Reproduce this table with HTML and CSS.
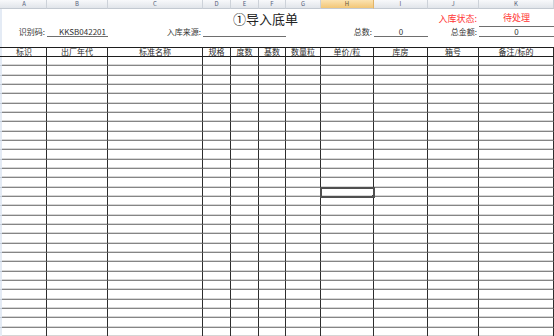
FILE: index.html
```html
<!DOCTYPE html>
<html lang="zh-CN">
<head>
<meta charset="utf-8">
<title>导入底单</title>
<link rel="stylesheet" href="styles.css">
</head>
<body>
<table class="sheet">
  <colgroup>
    <col class="c-stub"><col class="c-a"><col class="c-b"><col class="c-c"><col class="c-d"><col class="c-e"><col class="c-f"><col class="c-g"><col class="c-h"><col class="c-i"><col class="c-j"><col class="c-k">
  </colgroup>
  <thead>
    <tr class="colhdr">
      <th class="corner"></th><th>A</th><th>B</th><th>C</th><th>D</th><th>E</th><th>F</th><th>G</th><th class="on">H</th><th>I</th><th>J</th><th>K</th>
    </tr>
  </thead>
  <tbody>
    <tr class="title-row">
      <td class="stub"></td>
      <td class="title" colspan="9">①导入底单</td>
      <td class="red right">入库状态:</td>
      <td class="red center ul">待处理</td>
    </tr>
    <tr class="info-row">
      <td class="stub"></td>
      <td class="right">识别码:</td>
      <td class="right ul">KKSB042201</td>
      <td class="right">入库来源:</td>
      <td class="ul" colspan="3"></td>
      <td></td>
      <td class="right">总数:</td>
      <td class="center ul">0</td>
      <td class="right">总金额:</td>
      <td class="center ul">0</td>
    </tr>
    <tr class="blank-row">
      <td class="stub"></td><td colspan="11"></td>
    </tr>
    <tr class="hdr">
      <td class="stub"></td><td>标识</td><td>出厂年代</td><td>标准名称</td><td>规格</td><td>度数</td><td>基数</td><td>数量粒</td><td>单价/粒</td><td>库房</td><td>箱号</td><td>备注/标的</td>
    </tr>
    <tr class="r"><td class="stub"></td><td></td><td></td><td></td><td></td><td></td><td></td><td></td><td></td><td></td><td></td><td></td></tr>
    <tr class="r"><td class="stub"></td><td></td><td></td><td></td><td></td><td></td><td></td><td></td><td></td><td></td><td></td><td></td></tr>
    <tr class="r"><td class="stub"></td><td></td><td></td><td></td><td></td><td></td><td></td><td></td><td></td><td></td><td></td><td></td></tr>
    <tr class="r"><td class="stub"></td><td></td><td></td><td></td><td></td><td></td><td></td><td></td><td></td><td></td><td></td><td></td></tr>
    <tr class="r"><td class="stub"></td><td></td><td></td><td></td><td></td><td></td><td></td><td></td><td></td><td></td><td></td><td></td></tr>
    <tr class="r"><td class="stub"></td><td></td><td></td><td></td><td></td><td></td><td></td><td></td><td></td><td></td><td></td><td></td></tr>
    <tr class="r"><td class="stub"></td><td></td><td></td><td></td><td></td><td></td><td></td><td></td><td></td><td></td><td></td><td></td></tr>
    <tr class="r"><td class="stub"></td><td></td><td></td><td></td><td></td><td></td><td></td><td></td><td></td><td></td><td></td><td></td></tr>
    <tr class="r"><td class="stub"></td><td></td><td></td><td></td><td></td><td></td><td></td><td></td><td></td><td></td><td></td><td></td></tr>
    <tr class="r"><td class="stub"></td><td></td><td></td><td></td><td></td><td></td><td></td><td></td><td></td><td></td><td></td><td></td></tr>
    <tr class="r"><td class="stub"></td><td></td><td></td><td></td><td></td><td></td><td></td><td></td><td></td><td></td><td></td><td></td></tr>
    <tr class="r"><td class="stub"></td><td></td><td></td><td></td><td></td><td></td><td></td><td></td><td></td><td></td><td></td><td></td></tr>
    <tr class="r"><td class="stub"></td><td></td><td></td><td></td><td></td><td></td><td></td><td></td><td></td><td></td><td></td><td></td></tr>
    <tr class="r"><td class="stub"></td><td></td><td></td><td></td><td></td><td></td><td></td><td></td><td></td><td></td><td></td><td></td></tr>
    <tr class="r"><td class="stub"></td><td></td><td></td><td></td><td></td><td></td><td></td><td></td><td class="sel"></td><td></td><td></td><td></td></tr>
    <tr class="r"><td class="stub"></td><td></td><td></td><td></td><td></td><td></td><td></td><td></td><td></td><td></td><td></td><td></td></tr>
    <tr class="r"><td class="stub"></td><td></td><td></td><td></td><td></td><td></td><td></td><td></td><td></td><td></td><td></td><td></td></tr>
    <tr class="r"><td class="stub"></td><td></td><td></td><td></td><td></td><td></td><td></td><td></td><td></td><td></td><td></td><td></td></tr>
    <tr class="r"><td class="stub"></td><td></td><td></td><td></td><td></td><td></td><td></td><td></td><td></td><td></td><td></td><td></td></tr>
    <tr class="r"><td class="stub"></td><td></td><td></td><td></td><td></td><td></td><td></td><td></td><td></td><td></td><td></td><td></td></tr>
    <tr class="r"><td class="stub"></td><td></td><td></td><td></td><td></td><td></td><td></td><td></td><td></td><td></td><td></td><td></td></tr>
    <tr class="r"><td class="stub"></td><td></td><td></td><td></td><td></td><td></td><td></td><td></td><td></td><td></td><td></td><td></td></tr>
    <tr class="r"><td class="stub"></td><td></td><td></td><td></td><td></td><td></td><td></td><td></td><td></td><td></td><td></td><td></td></tr>
    <tr class="r"><td class="stub"></td><td></td><td></td><td></td><td></td><td></td><td></td><td></td><td></td><td></td><td></td><td></td></tr>
    <tr class="r"><td class="stub"></td><td></td><td></td><td></td><td></td><td></td><td></td><td></td><td></td><td></td><td></td><td></td></tr>
    <tr class="r"><td class="stub"></td><td></td><td></td><td></td><td></td><td></td><td></td><td></td><td></td><td></td><td></td><td></td></tr>
    <tr class="r"><td class="stub"></td><td></td><td></td><td></td><td></td><td></td><td></td><td></td><td></td><td></td><td></td><td></td></tr>
    <tr class="r"><td class="stub"></td><td></td><td></td><td></td><td></td><td></td><td></td><td></td><td></td><td></td><td></td><td></td></tr>
    <tr class="r"><td class="stub"></td><td></td><td></td><td></td><td></td><td></td><td></td><td></td><td></td><td></td><td></td><td></td></tr>
    <tr class="r"><td class="stub"></td><td></td><td></td><td></td><td></td><td></td><td></td><td></td><td></td><td></td><td></td><td></td></tr>
  </tbody>
</table>
</body>
</html>
```
FILE: styles.css
```css
* { box-sizing: border-box; }
html, body { margin: 0; width: 554px; height: 336px; overflow: hidden; background: #fff; }
body { font-family: "Noto Sans CJK SC", "Noto Sans", sans-serif; color: #222; }

.sheet { border-collapse: separate; border-spacing: 0; table-layout: fixed; width: 554px; }
.sheet td, .sheet th { padding: 0; font-weight: normal; white-space: nowrap; line-height: 1; }

.c-stub { width: 2px; }
.c-a { width: 45px; }
.c-b { width: 61px; }
.c-c { width: 95px; }
.c-d { width: 28px; }
.c-e { width: 28px; }
.c-f { width: 27px; }
.c-g { width: 35px; }
.c-h { width: 53px; }
.c-i { width: 54px; }
.c-j { width: 51px; }
.c-k { width: 75px; }

/* column letters */
.colhdr { height: 9px; }
.colhdr th { font-size: 6px; color: #56627a; text-align: center; vertical-align: middle; overflow: hidden;
  background: linear-gradient(#f8f9fb, #e1e5ea); border-right: 1px solid #cdd2d9; border-bottom: 1px solid #c3c9d1; }
.colhdr th.on { background: linear-gradient(#fbe3b2, #f2c676); color: #6b5838; border-right-color: #e2b468; }
.colhdr th.corner { border-right: 0; }

.stub { background: #e4ebf5; }

/* top area */
.title-row { height: 18px; }
.title-row td { vertical-align: middle; }
.info-row { height: 10px; }
.info-row td { font-size: 8px; vertical-align: middle; color: #333; }
.blank-row { height: 10px; }

.title { font-size: 13px; text-align: center; padding-left: 101px; color: #222; }
.sheet td.title { padding-left: 101px; }
.red { color: #ff3535; font-size: 9px; }
.right { text-align: right; }
.sheet td.right { padding-right: 2px; }
.center { text-align: center; }
.ul { border-bottom: 1px solid #6e6e6e; }

/* header */
.hdr { height: 9.333px; }
.hdr td { font-size: 8px; text-align: center; vertical-align: middle; color: #2a2a2a;
  border-top: 1px solid #1e1e1e; border-bottom: 1px solid #1e1e1e; border-right: 1px solid #2a2a2a; }
.hdr td.stub { border-right: 0; }

/* data rows */
.r { height: 9.333px; }
.r td { border-right: 1px solid #2e2e2e; border-bottom: 1px solid #858585; box-shadow: inset 0 -1px 0 #d6d6d6; }
.r td.stub { border-right: 0; border-bottom-color: #c5cfdc; box-shadow: none; }

.r td.sel { position: relative; outline: 2px solid #4f4f4f; outline-offset: -1px; }
.r td.sel::after { content: ""; position: absolute; right: -2px; bottom: -2px; width: 3px; height: 3px; background: #4f4f4f; }
```
